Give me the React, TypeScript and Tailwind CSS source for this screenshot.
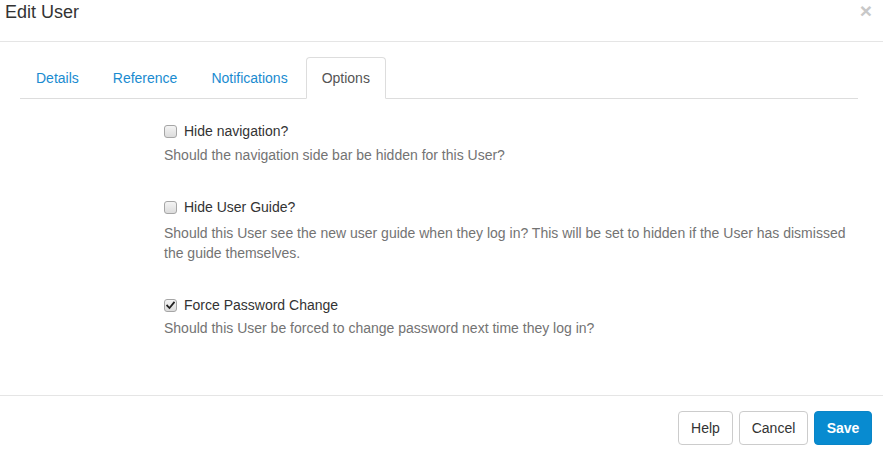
import React from "react";

function Box({ checked }: { checked?: boolean }) {
  return (
    <span className="absolute left-0 top-[4px] w-[13px] h-[13px] rounded-[3px] border border-[#a6a6a6] bg-gradient-to-b from-[#f4f4f4] to-[#dcdcdc] flex items-center justify-center">
      {checked && (
        <svg width="9" height="9" viewBox="0 0 9 9">
          <path d="M1.2 4.6 L3.5 7 L7.9 1.6" stroke="#222" strokeWidth="1.8" fill="none" strokeLinecap="square" />
        </svg>
      )}
    </span>
  );
}

function Option({
  label,
  desc,
  checked,
  descClass = "mt-[4px]",
}: {
  label: string;
  desc: React.ReactNode;
  checked?: boolean;
  descClass?: string;
}) {
  return (
    <div className="flex flex-col">
      <label className="relative pl-[20px] h-[20px] leading-[20px] text-[#333]">
        <Box checked={checked} />
        {label}
      </label>
      <p className={`${descClass} leading-[20px] text-[#737373]`}>{desc}</p>
    </div>
  );
}

export default function App() {
  return (
    <div
      className="w-[883px] h-[454px] bg-white flex flex-col text-[14px] overflow-hidden"
      style={{ fontFamily: '"Liberation Sans", Arial, sans-serif' }}
    >
      <div className="h-[42px] border-b border-[#e5e5e5] flex items-start justify-between pl-[5px] pr-[11px] shrink-0">
        <h4 className="text-[18px] leading-[25px] text-[#333]">Edit User</h4>
        <span className="text-[21px] font-bold leading-[21px] text-[#c8c8c8]">×</span>
      </div>
      <div className="flex-1 flex flex-col pt-[15px] pl-[20px] pr-[25px]">
        <ul className="flex border-b border-[#ddd] h-[42px]">
          <li className="mr-[2px]">
            <a className="block px-[15px] py-[10px] leading-[20px] border border-transparent text-[#1a8bd0]">Details</a>
          </li>
          <li className="mr-[2px]">
            <a className="block px-[15px] py-[10px] leading-[20px] border border-transparent text-[#1a8bd0]">Reference</a>
          </li>
          <li className="mr-[2px]">
            <a className="block px-[15px] py-[10px] leading-[20px] border border-transparent text-[#1a8bd0]">Notifications</a>
          </li>
          <li className="mr-[2px]">
            <a className="block px-[15px] py-[10px] leading-[20px] border border-[#ddd] border-b-white rounded-t-[4px] bg-white text-[#555] h-[42px]">
              Options
            </a>
          </li>
        </ul>
        <div className="pl-[144px] pt-[22px] flex flex-col gap-[32px]">
          <Option label="Hide navigation?" desc="Should the navigation side bar be hidden for this User?" />
          <Option
            label="Hide User Guide?"
            descClass="mt-[6px]"
            desc={
              <>
                Should this User see the new user guide when they log in? This will be set to hidden if the User has dismissed
                <br />
                the guide themselves.
              </>
            }
          />
          <Option
            label="Force Password Change"
            checked
            descClass="mt-[3px]"
            desc="Should this User be forced to change password next time they log in?"
          />
        </div>
      </div>
      <div className="h-[59px] shrink-0 border-t border-[#e5e5e5] flex justify-end items-start pt-[15px] pr-[11px] gap-[6px]">
        <button className="h-[34px] w-[55px] flex items-center justify-center border border-[#ccc] rounded-[4px] bg-white text-[#333] leading-[20px]">Help</button>
        <button className="h-[34px] w-[69px] flex items-center justify-center border border-[#ccc] rounded-[4px] bg-white text-[#333] leading-[20px]">Cancel</button>
        <button className="h-[34px] w-[58px] flex items-center justify-center border border-[#0a85c7] rounded-[4px] bg-[#088bd0] text-white font-bold leading-[20px]">Save</button>
      </div>
    </div>
  );
}
